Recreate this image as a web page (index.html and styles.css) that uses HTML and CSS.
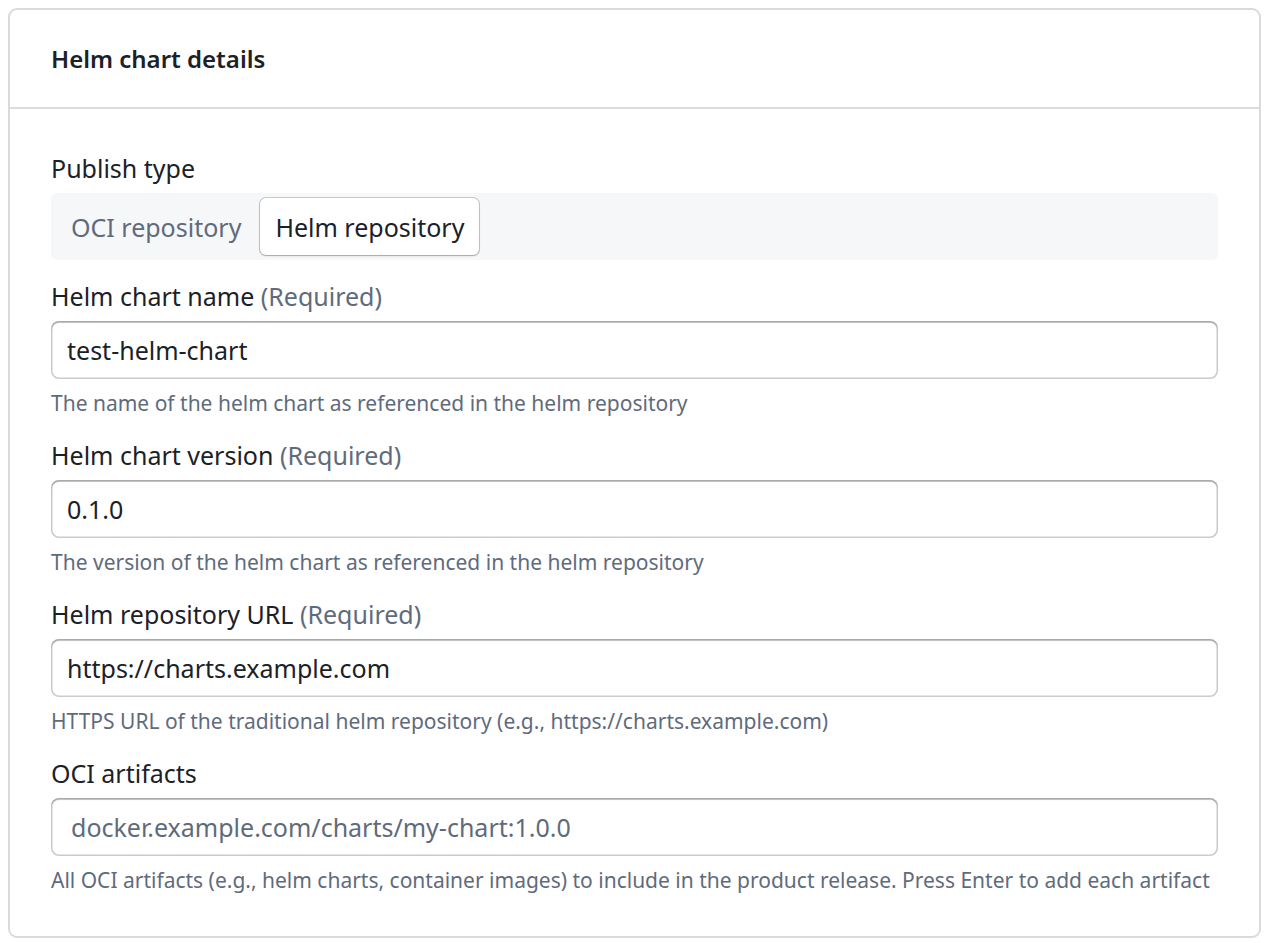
FILE: index.html
```html
<!DOCTYPE html>
<html lang="en">
<head>
    <meta charset="UTF-8">
    <meta name="viewport" content="width=device-width, initial-scale=1.0">
    <title>Helm chart details</title>
    <link rel="stylesheet" href="styles.css">
</head>
<body>

    <!-- Card -->
    <div class="card">
        <div class="card-header">
            <h2>Helm chart details</h2>
        </div>

        <div class="card-body">
            <!-- Publish type -->
            <div class="field field-segmented">
                <label class="field-label">Publish type</label>
                <div class="segmented">
                    <button class="segment">OCI repository</button>
                    <button class="segment active">Helm repository</button>
                </div>
            </div>

            <div class="field">
                <label class="field-label">Helm chart name <span class="required">(Required)</span></label>
                <input class="text-input" type="text" value="test-helm-chart">
                <div class="helper">The name of the helm chart as referenced in the helm repository</div>
            </div>

            <div class="field">
                <label class="field-label">Helm chart version <span class="required">(Required)</span></label>
                <input class="text-input" type="text" value="0.1.0">
                <div class="helper">The version of the helm chart as referenced in the helm repository</div>
            </div>

            <div class="field">
                <label class="field-label">Helm repository URL <span class="required">(Required)</span></label>
                <input class="text-input" type="text" value="https://charts.example.com">
                <div class="helper">HTTPS URL of the traditional helm repository (e.g., https://charts.example.com)</div>
            </div>

            <div class="field">
                <label class="field-label">OCI artifacts</label>
                <div class="tag-input">
                    <input type="text" placeholder="docker.example.com/charts/my-chart:1.0.0">
                </div>
                <div class="helper">All OCI artifacts (e.g., helm charts, container images) to include in the product release. Press Enter to add each artifact</div>
            </div>
        </div>
    </div>

</body>
</html>
```

FILE: styles.css
```css
/* General */
body {
    margin: 8px;
    background: #ffffff;
    font-family: "Noto Sans", "Liberation Sans", sans-serif;
    color: #1c2127;
}

/* Card */
.card {
    border: 2px solid #dadada;
    border-radius: 9px;
    background: #fff;
}

.card-header {
    height: 97px;
    display: flex;
    align-items: center;
    padding: 0 41px;
    border-bottom: 2px solid #dcdcdc;
}

.card-header h2 {
    margin: 0;
    font-size: 24px;
    font-weight: 600;
}

.card-body {
    display: flex;
    flex-direction: column;
    gap: 25px;
    padding: 44px 41px 44px;
}

/* Fields */
.field {
    display: flex;
    flex-direction: column;
}

.field-segmented {
    margin-bottom: -4px;
}

.field-label {
    font-size: 25px;
    line-height: 30px;
    margin-bottom: 10px;
}

.required {
    color: #5f6b7c;
}

.helper {
    margin-top: 12px;
    font-size: 21px;
    line-height: 24px;
    color: #5f6b7c;
}

/* Segmented control */
.segmented {
    display: flex;
    gap: 4px;
    padding: 5px;
    background: #f6f7f9;
    border-radius: 6px;
}

.segment {
    height: 57px;
    padding: 0 15px;
    border: none;
    background: transparent;
    border-radius: 6px;
    font-family: inherit;
    font-size: 25px;
    color: #5f6b7c;
}

.segment.active {
    background: #fff;
    color: #1c2127;
    box-shadow: 0 0 0 1px rgba(17, 20, 24, 0.2), 0 1px 2px rgba(17, 20, 24, 0.2);
}

/* Inputs */
.text-input,
.tag-input {
    box-sizing: border-box;
    height: 58px;
    width: 100%;
    border: none;
    border-radius: 8px;
    background: #fff;
    box-shadow: inset 0 0 0 1.5px rgba(17, 20, 24, 0.22), inset 0 2px 1px rgba(17, 20, 24, 0.18);
    padding: 0 16px;
    font-family: inherit;
    font-size: 25px;
    color: #1c2127;
    outline: none;
}

.tag-input {
    display: flex;
    align-items: center;
    padding: 0 20px;
}

.tag-input input {
    flex: 1;
    border: none;
    outline: none;
    padding: 0;
    font-family: inherit;
    font-size: 25px;
    background: transparent;
}

.tag-input input::placeholder {
    color: #5f6b7c;
}
```
